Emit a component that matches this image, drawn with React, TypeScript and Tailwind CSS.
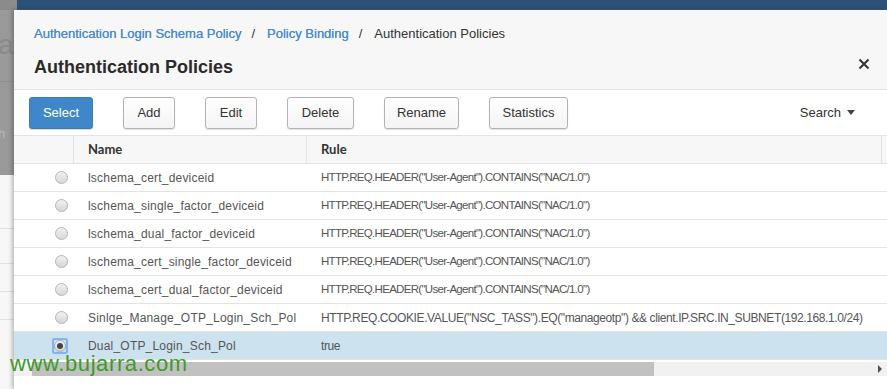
import { useState } from 'react';

type Policy = { name: string; rule: string; tight?: boolean };

const policies: Policy[] = [
  { name: 'lschema_cert_deviceid', rule: 'HTTP.REQ.HEADER("User-Agent").CONTAINS("NAC/1.0")', tight: true },
  { name: 'lschema_single_factor_deviceid', rule: 'HTTP.REQ.HEADER("User-Agent").CONTAINS("NAC/1.0")', tight: true },
  { name: 'lschema_dual_factor_deviceid', rule: 'HTTP.REQ.HEADER("User-Agent").CONTAINS("NAC/1.0")', tight: true },
  { name: 'lschema_cert_single_factor_deviceid', rule: 'HTTP.REQ.HEADER("User-Agent").CONTAINS("NAC/1.0")', tight: true },
  { name: 'lschema_cert_dual_factor_deviceid', rule: 'HTTP.REQ.HEADER("User-Agent").CONTAINS("NAC/1.0")', tight: true },
  {
    name: 'Sinlge_Manage_OTP_Login_Sch_Pol',
    rule: 'HTTP.REQ.COOKIE.VALUE("NSC_TASS").EQ("manageotp") && client.IP.SRC.IN_SUBNET(192.168.1.0/24)',
  },
  { name: 'Dual_OTP_Login_Sch_Pol', rule: 'true' },
];

const toolButtons = [
  { label: 'Add', w: 'w-[52px]' },
  { label: 'Edit', w: 'w-[52px]' },
  { label: 'Delete', w: 'w-[67px]' },
  { label: 'Rename', w: 'w-[75px]' },
  { label: 'Statistics', w: 'w-[79px]' },
];

function Radio({ checked }: { checked: boolean }) {
  if (checked) {
    return (
      <div className="w-[16px] h-[16px] rounded-[3px] border-2 border-[#80b3f2] flex items-center justify-center">
        <div className="w-[12px] h-[12px] rounded-full border border-[#a9a9a9] bg-gradient-to-b from-[#f4f4f4] to-[#d9d9d9] flex items-center justify-center">
          <div className="w-[6px] h-[6px] rounded-full bg-[#444]" />
        </div>
      </div>
    );
  }
  return <div className="w-[13px] h-[13px] rounded-full border border-[#b4b4b4] bg-gradient-to-b from-[#f2f2f2] to-[#d6d6d6]" />;
}

export default function App() {
  const [selected, setSelected] = useState(6);

  return (
    <div className="relative w-[887px] h-[389px] overflow-hidden bg-white flex flex-col font-['Liberation_Sans',Arial,sans-serif]">
      {/* page behind the dialog */}
      <div className="flex h-[10px] shrink-0">
        <div className="w-[17px] bg-[#8b8b8b]" />
        <div className="flex-1 bg-[#2b5177] border-b border-[#4b5a6a]" />
      </div>

      <div className="flex flex-1 min-h-0">
        <div className="w-[14px] shrink-0 flex flex-col">
          <div className="h-[165px] bg-[#9a9a9a] flex flex-col">
            <div className="h-[72px] border-b border-[#8f8f8f] text-[28px] text-[#8a8a8a] leading-[70px] -ml-[2px] overflow-hidden">a</div>
            <div className="h-[84px] text-[13px] text-[#b8b8b8] leading-[104px] -ml-[2px] overflow-hidden">h</div>
          </div>
          <div className="flex-1 bg-[#f7f7f7] flex flex-col">
            <div className="h-[54px] border-b border-[#e2e2e2]" />
            <div className="h-[35px] border-b border-[#e2e2e2]" />
            <div className="h-[28px] border-b border-[#e2e2e2]" />
            <div className="h-[28px] border-b border-[#e2e2e2]" />
          </div>
        </div>

        {/* dialog */}
        <div className="flex-1 min-w-0 flex flex-col bg-white shadow-[-2px_0_4px_rgba(0,0,0,0.25)]">
          <div className="h-[80px] shrink-0 bg-[#f7f7f7] border-b border-[#e3e3e3] flex flex-col pl-[20px] pr-[17px]">
            <div className="flex items-center h-[28px] mt-[10px] text-[13px]">
              <span className="text-[#4a8bd0] [text-shadow:0_0_0.4px_#4a8bd0]">Authentication Login Schema Policy</span>
              <span className="ml-[10px] mr-[12px] text-[#333]">/</span>
              <span className="text-[#4a8bd0] [text-shadow:0_0_0.4px_#4a8bd0]">Policy Binding</span>
              <span className="ml-[10px] mr-[12px] text-[#333]">/</span>
              <span className="text-[#333]">Authentication Policies</span>
            </div>
            <div className="flex items-center justify-between h-[30px] mt-[4px]">
              <span className="text-[18px] font-bold text-[#2b2b2b]">Authentication Policies</span>
              <svg width="12" height="12" viewBox="0 0 12 12" className="-mt-[7px]">
                <path d="M1.5 1.5 L10.5 10.5 M10.5 1.5 L1.5 10.5" stroke="#333" strokeWidth="2" />
              </svg>
            </div>
          </div>

          {/* toolbar */}
          <div className="h-[46px] shrink-0 flex items-center pl-[15px] pr-[32px] border-b border-[#e3e3e3]">
            <button
              className="h-[32px] w-[64px] rounded-[3px] bg-[#3f87c8] border border-[#3a7cb8] text-white text-[13px] shadow-[0_1px_0_rgba(0,0,0,0.15)]"
              onClick={() => setSelected(selected)}
            >
              Select
            </button>
            {toolButtons.map((b) => (
              <button
                key={b.label}
                className={`ml-[30px] h-[32px] ${b.w} rounded-[3px] border border-[#b3b3b3] bg-gradient-to-b from-white to-[#f4f4f4] text-[#333] text-[13px] shadow-[0_1px_1px_rgba(0,0,0,0.12)]`}
              >
                {b.label}
              </button>
            ))}
            <div className="ml-auto flex items-center gap-[6px] text-[13px] text-[#333]">
              Search
              <svg width="8" height="5" viewBox="0 0 8 5">
                <path d="M0 0 H8 L4 5 Z" fill="#444" />
              </svg>
            </div>
          </div>

          {/* table */}
          <div className="flex flex-col text-[12px] text-[#555]">
            <div className="flex h-[28px] bg-[#f7f7f7] border-b border-[#e3e3e3] items-center font-bold text-[#333] font-['Lato',sans-serif] text-[13px]">
              <div className="w-[60px] shrink-0 h-full border-r border-[#e3e3e3]" />
              <div className="w-[233px] shrink-0 h-full border-r border-[#e3e3e3] pl-[14px] flex items-center">Name</div>
              <div className="w-[575px] shrink-0 h-full border-r border-[#e3e3e3] pl-[14px] flex items-center">Rule</div>
            </div>
            {policies.map((p, i) => (
              <div
                key={p.name}
                className={`flex h-[28px] items-center border-b border-[#e3e3e3] ${i === selected ? 'bg-[#cce2ef]' : 'bg-white'}`}
                onClick={() => setSelected(i)}
              >
                <div className="w-[60px] shrink-0 flex justify-end pr-[6px]">
                  <Radio checked={i === selected} />
                </div>
                <div className="w-[233px] shrink-0 pl-[14px] whitespace-nowrap tracking-[0.2px]">{p.name}</div>
                <div className={`shrink-0 pl-[14px] whitespace-nowrap ${p.tight ? 'text-[11.5px] tracking-[-0.7px]' : 'tracking-[-0.4px]'}`}>{p.rule}</div>
              </div>
            ))}
            {/* horizontal scrollbar */}
            <div className="h-[14px] mt-[2px] bg-[#f1f1f1] flex items-center">
              <div className="ml-[18px] w-[622px] h-full bg-[#c1c1c1]" />
              <div className="ml-auto mr-[5px] w-0 h-0 border-y-[4px] border-y-transparent border-l-[4px] border-l-[#505050]" />
            </div>
          </div>
        </div>
      </div>

      {/* watermark */}
      <div className="absolute left-[10px] top-[353px] text-[22px] leading-[22px] text-[#3d9a2c] tracking-[0.6px]">
        www.bujarra.com
      </div>
    </div>
  );
}
